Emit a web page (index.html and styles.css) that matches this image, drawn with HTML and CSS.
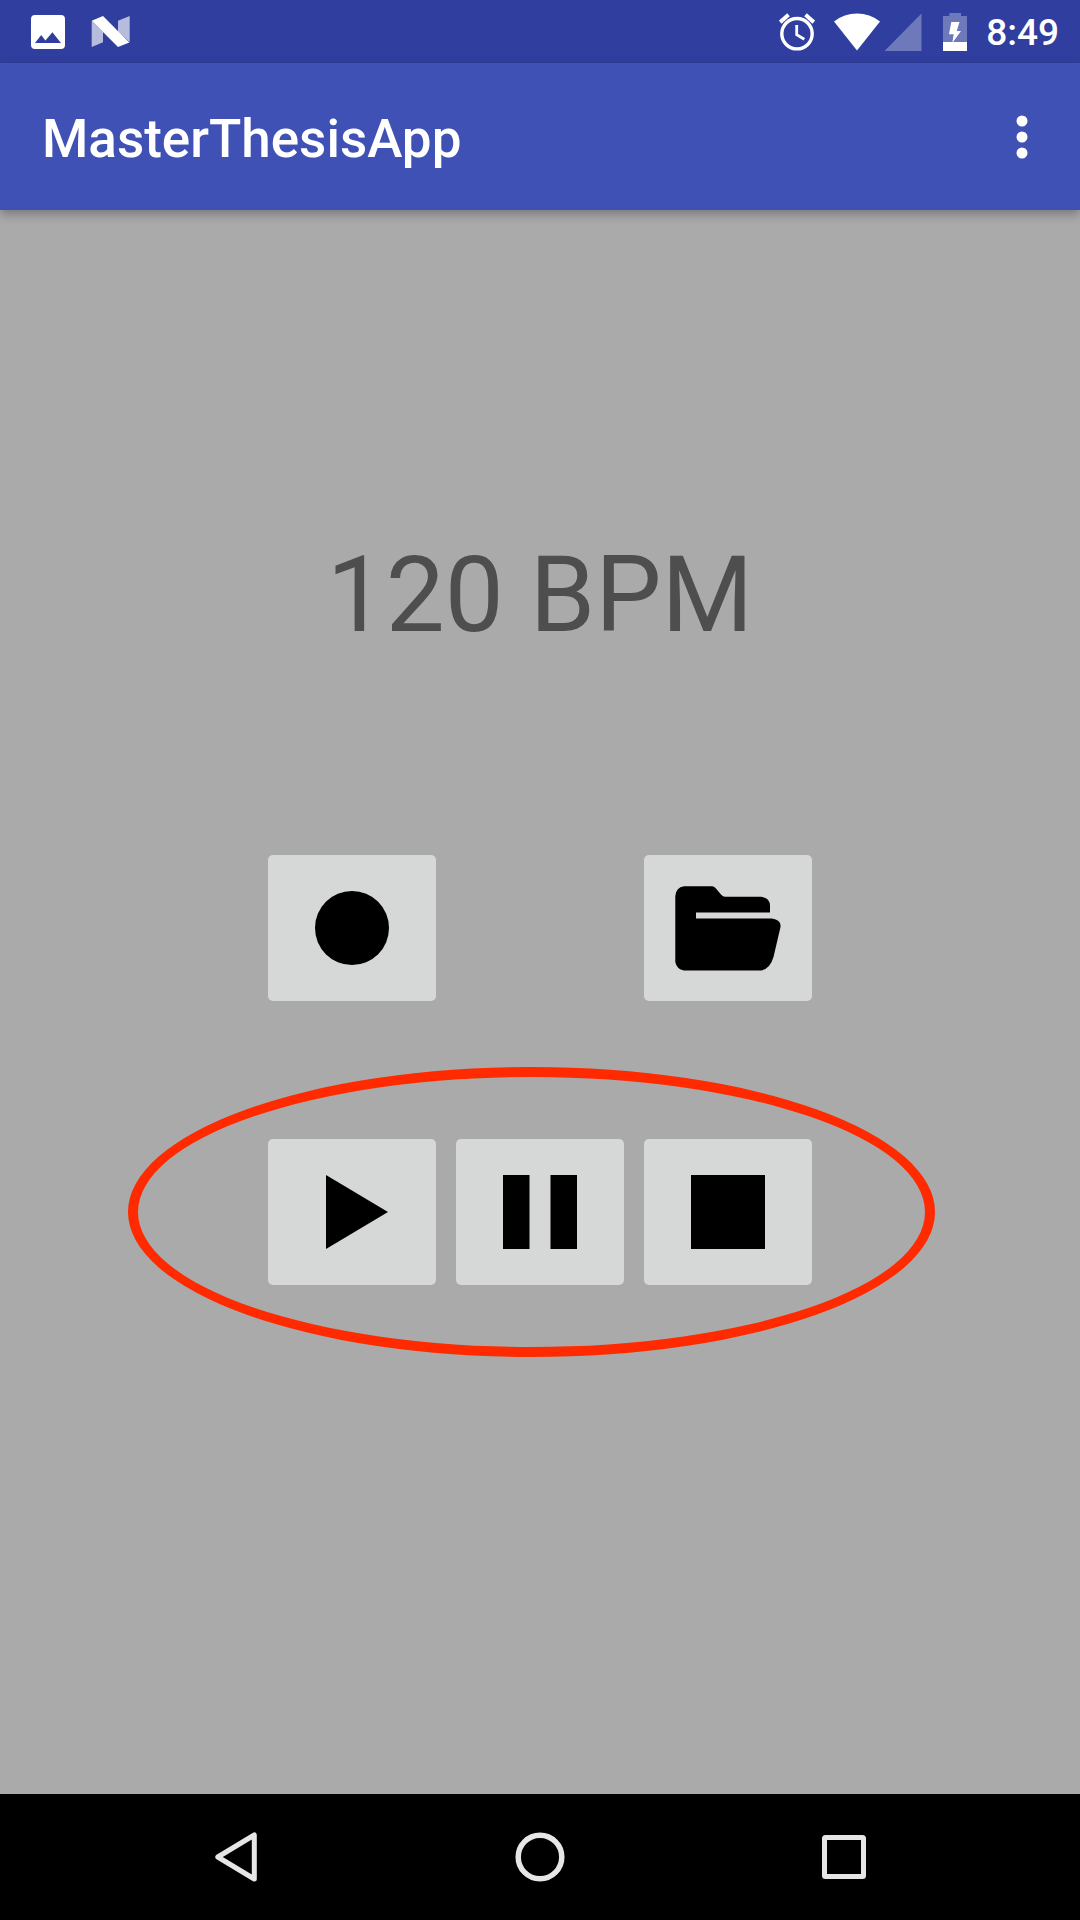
FILE: index.html
```html
<!DOCTYPE html>
<html lang="en">
<head>
  <meta charset="utf-8">
  <meta name="viewport" content="width=device-width, initial-scale=1">
  <title>MasterThesisApp</title>
  <link rel="stylesheet" href="styles.css">
</head>
<body>
  <div class="status-bar">
    <div class="notifications">
      <svg width="34" height="34" viewBox="0 0 34 34" fill="#fff" fill-rule="evenodd" aria-hidden="true">
        <path d="M4 0H30Q34 0 34 4V30Q34 34 30 34H4Q0 34 0 30V4Q0 0 4 0ZM4 28H30L21.4 17.2L14.4 25.6L10.2 20Z"/>
      </svg>
      <svg width="39" height="32" viewBox="0 0 39 32" fill="#fff" aria-hidden="true">
        <path opacity=".65" d="M.7 5L12 16V26.3L.7 31ZM27 4.7L38.7 0V26.3L27 15.5Z"/>
        <path d="M.7 4.7L12 0L38.3 26.5L27 31Z"/>
      </svg>
    </div>
    <div class="indicators">
      <svg width="36" height="38" viewBox="0 0 36 38" fill="none" stroke="#fff" aria-hidden="true">
        <circle cx="18" cy="20.7" r="15.2" stroke-width="3.4"/>
        <path d="M17.7 12V21.6L25.3 26.3" stroke-width="2.8"/>
        <path d="M1.2 9.2L9.5 1.8M34.8 9.2L26.5 1.8" stroke-width="4"/>
      </svg>
      <div class="network">
        <svg width="46" height="38" viewBox="0 0 46 38" fill="#fff" aria-hidden="true">
          <path d="M23 37.5L0 8.5A37 37 0 0 1 46 8.5Z"/>
        </svg>
        <svg width="38" height="38" viewBox="0 0 38 38" fill="#fff" aria-hidden="true">
          <path opacity=".3" d="M.5 38L37.5 .5V38Z"/>
        </svg>
      </div>
      <svg width="26" height="38" viewBox="-2 0 26 38" fill="#fff" aria-hidden="true">
        <path opacity=".3" d="M0 3H6.3V0H18V3H24V29H0Z"/>
        <path d="M0 29H24V38H0ZM8.3 9H16.5L13.7 18H18L9.3 30L10.7 21.3H6Z"/>
      </svg>
      <time class="clock">8:49</time>
    </div>
  </div>

  <header class="app-bar">
    <h1 class="app-title">MasterThesisApp</h1>
    <button class="icon-button" type="button" aria-label="More options">
      <svg width="12" height="44" viewBox="0 0 12 44" fill="#fff">
        <circle cx="6" cy="6" r="5.5"/>
        <circle cx="6" cy="22" r="5.5"/>
        <circle cx="6" cy="38" r="5.5"/>
      </svg>
    </button>
  </header>

  <main class="content">
    <p class="tempo">120 BPM</p>
    <div class="controls">
      <div class="control-row">
        <button class="control" type="button" aria-label="Record">
          <svg width="74" height="74" viewBox="0 0 74 74"><circle cx="37" cy="37" r="37"/></svg>
        </button>
        <button class="control control-last" type="button" aria-label="Open file">
          <svg width="106" height="85" viewBox="0 0 106 85">
            <path d="M9 .3H37Q39 .3 40.5 2L46 8.5Q48 10.8 50 10.8H86Q95 11.5 95 20V26.5H21V32.5H97Q106.5 34 105.5 41L98.5 71Q95 83 86 84.5H9Q1.5 83 .3 76V10Q1 1.5 9 .3Z"/>
          </svg>
        </button>
      </div>
      <div class="control-row">
        <button class="control" type="button" aria-label="Play">
          <svg width="74" height="74" viewBox="0 0 74 74"><path d="M11 0L73 37L11 74Z"/></svg>
        </button>
        <button class="control" type="button" aria-label="Pause">
          <svg width="74" height="74" viewBox="0 0 74 74"><path d="M0 0H26.5V74H0ZM47.5 0H74V74H47.5Z"/></svg>
        </button>
        <button class="control" type="button" aria-label="Stop">
          <svg width="74" height="74" viewBox="0 0 74 74"><path d="M0 0H74V74H0Z"/></svg>
        </button>
        <div class="highlight"></div>
      </div>
    </div>
  </main>

  <nav class="nav-bar" aria-label="System">
    <button class="icon-button" type="button" aria-label="Back">
      <svg width="42" height="50" viewBox="0 0 42 50" fill="none" stroke="#e6e6e6" stroke-width="5" stroke-linejoin="round">
        <path d="M39.3 3V47L2.8 25Z"/>
      </svg>
    </button>
    <button class="icon-button" type="button" aria-label="Home">
      <svg width="50" height="50" viewBox="0 0 50 50" fill="none" stroke="#e6e6e6" stroke-width="5.5">
        <circle cx="25" cy="25" r="21.8"/>
      </svg>
    </button>
    <button class="icon-button" type="button" aria-label="Recent apps">
      <svg width="44" height="44" viewBox="0 0 44 44" fill="none" stroke="#e6e6e6" stroke-width="5" stroke-linejoin="round">
        <rect x="2.5" y="2.5" width="39" height="39" rx="1"/>
      </svg>
    </button>
  </nav>
</body>
</html>
```
FILE: styles.css
```css
* {
  box-sizing: border-box;
}

body {
  margin: 0;
  min-height: 100vh;
  display: flex;
  flex-direction: column;
  background: #aaaaaa;
  font-family: Roboto, sans-serif;
}

svg {
  display: block;
}

button {
  border: 0;
  padding: 0;
  font: inherit;
  cursor: pointer;
}

.status-bar {
  display: flex;
  justify-content: space-between;
  align-items: center;
  height: 63px;
  padding: 0 21px 0 31px;
  background: #303f9f;
  color: #fff;
}

.notifications,
.indicators {
  display: flex;
  align-items: center;
}

.notifications {
  gap: 26px;
}

.indicators {
  gap: 19px;
}

.network {
  display: flex;
  gap: 4px;
}

.clock {
  font-size: 37px;
  line-height: 44px;
  font-weight: 500;
  padding-top: 2px;
}

.app-bar {
  position: relative;
  display: flex;
  justify-content: space-between;
  align-items: center;
  height: 147px;
  padding: 0 52px 0 42px;
  background: #3f51b5;
  color: #fff;
  box-shadow: 0 4px 10px rgba(0, 0, 0, 0.3);
}

.app-title {
  margin: 0;
  padding-top: 4px;
  font-size: 53px;
  line-height: 62px;
  font-weight: 500;
}

.icon-button {
  display: flex;
  justify-content: center;
  align-items: center;
  background: none;
}

.content {
  flex: 1;
  display: flex;
  flex-direction: column;
  align-items: center;
  gap: 198px;
  padding: 324px 0 200px;
}

.tempo {
  margin: 0;
  font-size: 105px;
  line-height: 123px;
  color: #4e4e4e;
}

.controls {
  display: grid;
  gap: 138px;
}

.control-row {
  position: relative;
  display: grid;
  grid-template-columns: repeat(3, 168px);
  gap: 20px;
}

.control {
  display: flex;
  justify-content: center;
  align-items: center;
  height: 146px;
  border-radius: 5px;
  background: #d6d8d7;
}

.control-last {
  grid-column: 3;
}

/* Red ring drawn over the playback row */
.highlight {
  position: absolute;
  inset: -72px -123px -72px -140px;
  border: 10px solid #ff2a00;
  border-radius: 50%;
  pointer-events: none;
}

.nav-bar {
  display: grid;
  grid-template-columns: repeat(3, 1fr);
  height: 126px;
  padding: 0 84px;
  background: #000;
}
```
